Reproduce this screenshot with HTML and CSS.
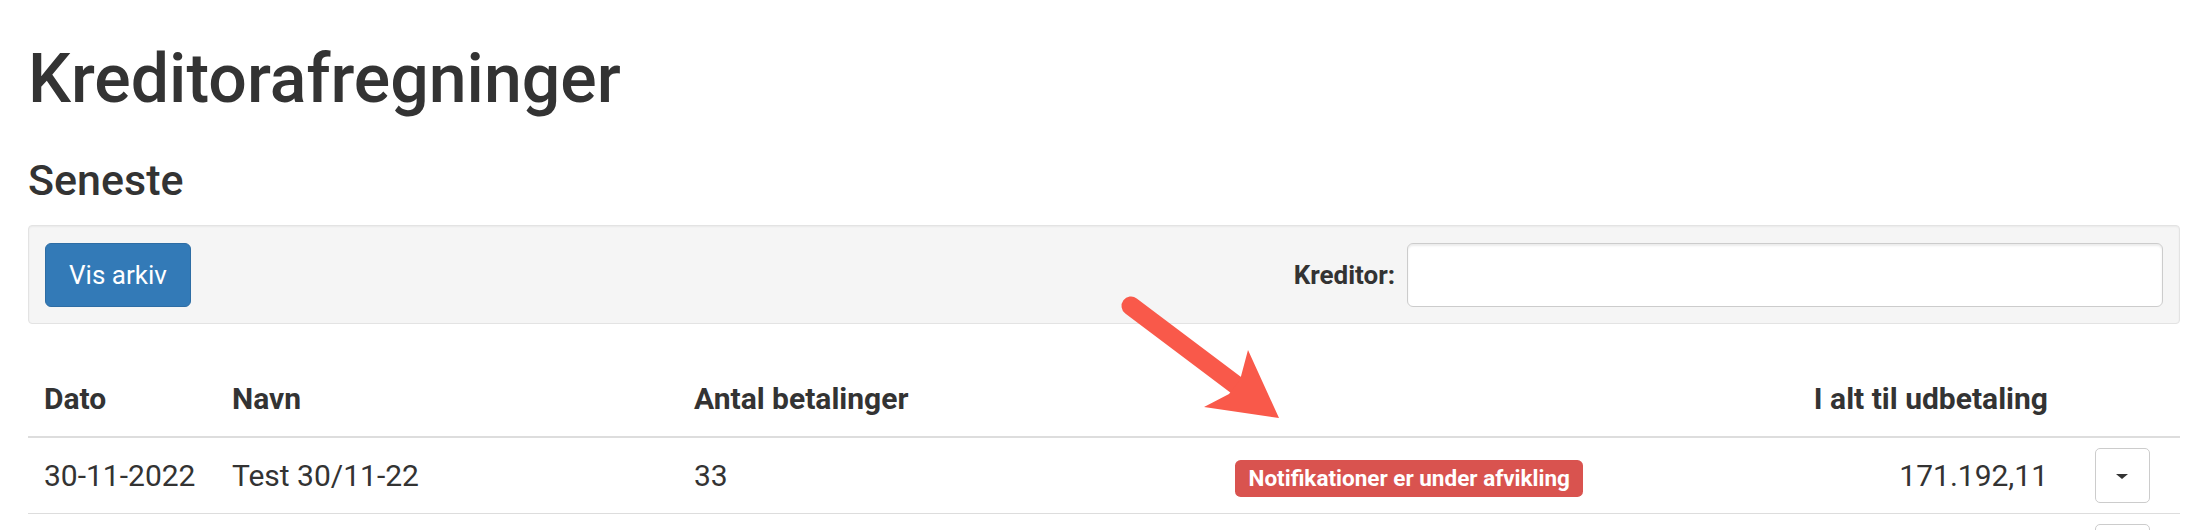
FILE: index.html
```html
<!doctype html>
<html lang="da">
<head>
    <meta charset="UTF-8">
    <title>Kreditorafregninger</title>
    <link rel="stylesheet" href="styles.css">
</head>
<body>
<div class="page">
    <h1 class="title">Kreditorafregninger</h1>
    <h3 class="subtitle">Seneste</h3>
    <div class="well">
        <button class="btn-primary" type="button">Vis arkiv</button>
        <div class="filter">
            <label for="kreditor">Kreditor:</label>
            <input id="kreditor" type="text">
        </div>
    </div>
    <table class="settlements">
        <colgroup>
            <col class="col-date">
            <col class="col-name">
            <col class="col-count">
            <col class="col-status">
            <col class="col-amount">
            <col class="col-menu">
        </colgroup>
        <thead>
        <tr>
            <th>Dato</th>
            <th>Navn</th>
            <th>Antal betalinger</th>
            <th></th>
            <th class="num">I alt til udbetaling</th>
            <th></th>
        </tr>
        </thead>
        <tbody>
        <tr>
            <td>30-11-2022</td>
            <td>Test 30/11-22</td>
            <td>33</td>
            <td><span class="label-danger">Notifikationer er under afvikling</span></td>
            <td class="num">171.192,11</td>
            <td class="menu"><button class="btn-caret" type="button"><span class="caret"></span></button></td>
        </tr>
        <tr>
            <td></td>
            <td></td>
            <td></td>
            <td></td>
            <td class="num"></td>
            <td class="menu"><button class="btn-caret" type="button"><span class="caret"></span></button></td>
        </tr>
        </tbody>
    </table>
</div>
<svg class="arrow" viewBox="1100 280 200 160" width="200" height="160">
    <line x1="1131" y1="306" x2="1236" y2="385" stroke="#f9594a" stroke-width="19" stroke-linecap="round"/>
    <polygon points="1248,350 1279,418 1204,407 1229,394 1240,380" fill="#f9594a"/>
</svg>
</body>
</html>
```

FILE: styles.css
```css
* {
    box-sizing: border-box;
}
body {
    margin: 0;
    font-family: Roboto, "Liberation Sans", sans-serif;
    color: #333;
    background: #fff;
}
.page {
    padding: 0 22px 0 28px;
}
.title {
    margin: 42px 0 0;
    font-size: 68px;
    font-weight: 500;
    line-height: 1.1;
}
.subtitle {
    margin: 40px 0 21px;
    font-size: 43px;
    font-weight: 500;
    line-height: 1.1;
}

/* filter bar */
.well {
    display: flex;
    align-items: center;
    padding: 17px 16px 16px;
    margin-bottom: 38px;
    background: #f5f5f5;
    border: 1px solid #e3e3e3;
    border-radius: 4px;
    box-shadow: inset 0 1px 2px rgba(0,0,0,.05);
}
.btn-primary {
    font-family: inherit;
    font-size: 26px;
    line-height: 36px;
    padding: 13px 23px;
    color: #fff;
    background: #337ab7;
    border: 1px solid #2e6da4;
    border-radius: 6px;
}
.filter {
    margin-left: auto;
    display: flex;
    align-items: center;
}
.filter label {
    font-size: 26px;
    font-weight: 700;
    margin-right: 12px;
}
.filter input {
    width: 756px;
    height: 64px;
    border: 1px solid #ccc;
    border-radius: 6px;
    background: #fff;
    box-shadow: inset 0 2px 2px rgba(0,0,0,.075);
}

/* table */
.settlements {
    width: 100%;
    table-layout: fixed;
    border-collapse: collapse;
    font-size: 30px;
}
.col-date { width: 188px; }
.col-name { width: 462px; }
.col-count { width: 541px; }
.col-status { width: 576px; }
.col-amount { width: 269px; }
.col-menu { width: 116px; }
.settlements th,
.settlements td {
    padding: 16px;
    line-height: 42px;
    text-align: left;
    white-space: nowrap;
}
.settlements th {
    font-weight: 700;
    vertical-align: bottom;
    border-bottom: 2px solid #ddd;
}
.settlements td {
    vertical-align: middle;
    border-top: 1px solid #ddd;
}
.settlements .num {
    text-align: right;
}
.settlements td.menu {
    padding: 10px 16px;
}
.label-danger {
    display: inline;
    padding: .2em .6em .3em;
    font-size: 75%;
    font-weight: 700;
    line-height: 1;
    color: #fff;
    background: #d9534f;
    border-radius: .25em;
}
.btn-caret {
    display: block;
    margin: 0 auto;
    width: 55px;
    height: 55px;
    padding: 0;
    background: #fff;
    border: 1px solid #ccc;
    border-radius: 5px;
}
.caret {
    display: inline-block;
    width: 0;
    height: 0;
    border-top: 5px solid #333;
    border-left: 6px solid transparent;
    border-right: 6px solid transparent;
    vertical-align: middle;
}

/* annotation */
.arrow {
    position: absolute;
    left: 1100px;
    top: 280px;
}
```
